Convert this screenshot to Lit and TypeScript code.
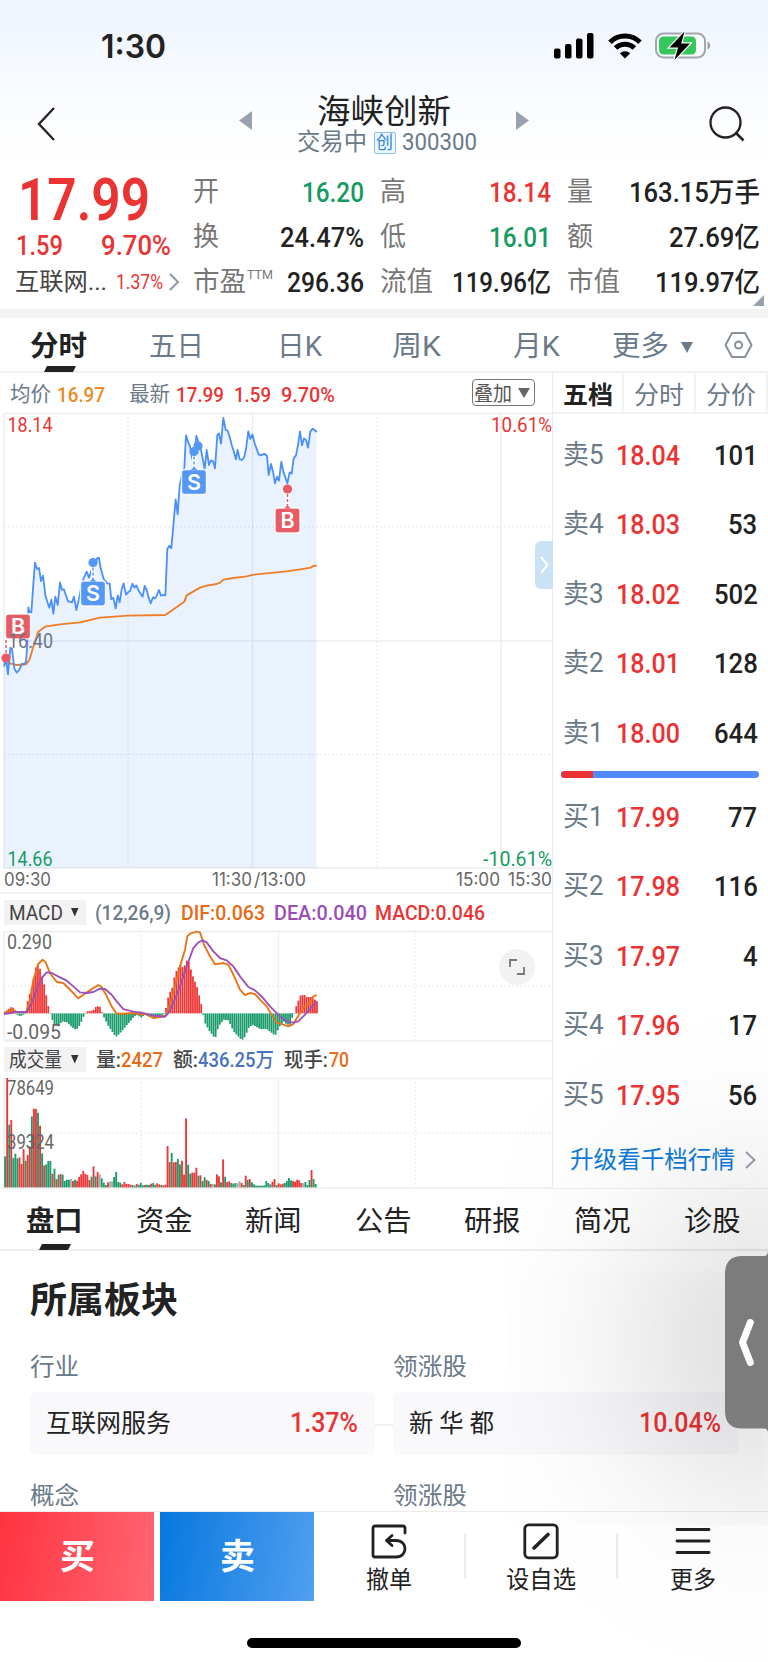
import { LitElement, html, svg, css } from "lit";
import { customElement, property } from "lit/decorators.js";

/* One line of text, stretched or condensed to a set advance width. */
@customElement("fit-text")
class FitText extends LitElement {
  @property() t = "";
  @property({ type: Number }) w = 0;
  @property({ type: Number }) gap = 0;
  static styles = css`
    :host { display: block; flex: none; height: 1em; line-height: 1; }
    .run { display: inline-block; white-space: pre; transform-origin: 0 50%; line-height: 1; vertical-align: top; }
  `;
  updated() {
    const run = this.renderRoot.querySelector(".run") as HTMLElement;
    run.style.transform = "none";
    const natural = run.getBoundingClientRect().width;
    this.style.width = this.w + "px";
    this.style.marginLeft = this.gap + "px";
    if (natural) run.style.transform = `scaleX(${this.w / natural})`;
  }
  render() {
    return html`<span class="run">${this.t}</span>`;
  }
}

const fit = (t: string, w: number, cls = "", gap = 0) =>
  html`<fit-text .t=${t} .w=${w} .gap=${gap} class=${cls}></fit-text>`;

type Pt = [number, number];
const parse = (s: string): Pt[] => s.trim().split(/\s+/).map((p) => p.split(",").map(Number) as Pt);
const at = (pts: Pt[], x: number) => {
  for (let i = 1; i < pts.length; i++) {
    if (x <= pts[i][0]) {
      const [a, b] = [pts[i - 1], pts[i]];
      return a[1] + ((b[1] - a[1]) * (x - a[0])) / (b[0] - a[0]);
    }
  }
  return pts[pts.length - 1][1];
};

/* Series are stored at three units per pixel. */
const PRICE = `12,875 17,848 24,898 31,818 36,822 43,880 50,893 58,884 66,866 72,868 78,860 81,820 83,780 85,697 88,710 94,712 99,640 105,563 111,582 117,579 123,618 129,602 136,660 142,680 148,698 154,674 160,716 166,665 173,690 180,622 186,645 192,643 198,662 204,679 210,680 216,682 222,665 229,705 236,675 243,640 250,612 260,590 267,608 278,575 285,570 292,549 297,549 302,580 311,612 322,625 329,626 334,673 340,668 347,701 353,661 359,682 365,643 371,625 378,659 384,652 390,648 397,626 403,638 409,631 415,645 421,655 428,665 434,633 440,645 446,668 452,685 459,667 465,670 471,660 477,645 483,662 489,660 496,661 502,522 508,512 514,520 521,440 527,373 533,418 539,330 546,300 553,278 558,181 564,200 570,215 577,252 583,240 589,182 595,200 601,215 608,250 614,282 620,225 627,270 633,256 639,258 645,280 652,180 657,175 663,206 670,129 677,165 683,167 689,185 696,213 702,232 708,253 713,225 719,253 726,255 732,248 738,222 745,169 751,192 757,178 764,205 770,222 776,238 782,241 788,238 795,237 801,243 806,300 813,267 819,290 825,325 831,305 837,317 844,260 850,290 857,310 862,325 869,292 875,296 881,250 888,241 894,210 900,169 906,211 912,190 918,195 924,218 931,170 938,161 944,165 950,171`;
const AVERAGE = `14,866 30,865 50,870 78,868 88,855 100,815 115,770 135,755 180,748 240,742 300,728 385,722 496,720 525,700 553,680 560,661 600,638 620,632 650,627 660,623 670,614 700,609 740,604 760,599 860,589 900,583 932,578 940,573 950,572`;
const HIST = parse(`12,518 36,500 46,515 50,524 60,530 72,524 76,518 85,470 92,455 100,420 106,385 112,375 118,382 124,405 130,425 136,455 142,490 148,515 152,525 160,552 175,560 185,545 200,548 215,562 228,571 240,555 250,530 256,521 260,515 280,512 283,503 298,498 304,514 310,530 325,560 347,592 360,580 375,562 400,533 410,525 425,535 435,522 445,532 460,532 475,530 485,528 495,521 500,490 507,460 515,450 525,400 540,375 550,385 562,357 568,372 575,402 590,440 600,480 607,510 612,545 625,570 645,597 655,560 670,540 685,542 700,575 725,602 735,590 745,565 757,555 780,568 800,568 825,588 838,560 850,545 860,555 870,555 877,530 883,521 888,500 900,468 912,465 920,472 935,472 950,485`);
const DIF = `12,520 25,515 36,508 50,517 78,518 90,480 100,420 115,372 128,360 137,368 150,400 170,427 190,430 205,445 235,476 250,465 265,455 280,445 295,436 305,442 318,465 335,500 350,522 370,522 400,520 425,525 435,522 460,535 480,532 497,528 510,495 525,440 540,380 555,330 562,290 570,282 590,276 600,278 612,315 630,350 645,374 670,370 685,375 700,405 720,450 735,466 750,460 765,463 780,480 800,500 815,525 830,548 850,555 865,560 880,553 895,528 910,505 930,490 940,470 950,466`;
const DEA = `12,523 50,517 80,517 95,490 110,450 125,415 140,398 155,400 180,413 200,423 220,440 240,458 260,460 280,457 300,447 315,448 335,465 350,485 370,508 400,516 430,520 460,528 495,531 505,520 520,490 540,440 560,380 580,325 595,308 608,302 620,308 640,335 660,355 680,362 700,380 720,410 745,442 765,452 785,470 810,500 840,530 860,545 880,549 895,545 910,530 930,508 950,485`;
const VOLUME = `g350 r115 g255 r241 g355 g342 g356 r353 r373 r328 g363 r346 r320 g230 r207 r208 g219 r258 g341 r377 g374 g364 g364 r402 g387 r418 g405 r403 g405 g424 g420 g420 n418 r424 g420 r423 r412 r404 r394 r402 r406 r421 g411 r380 g410 r397 n404 g416 g429 g436 r428 n425 n425 g412 g397 g427 g429 r434 r427 r433 r433 r435 g436 g438 r433 g435 g430 g437 r436 g435 g436 r432 g430 g435 r431 r434 g436 r437 r435 r319 r367 g340 r368 r367 g358 g374 r363 r405 r236 g375 g402 r399 r399 r384 g408 r407 g424 g413 r421 g424 r433 n433 g434 r404 r410 g428 r359 g411 r427 r425 g430 g432 g430 n430 n424 r430 g436 r408 g421 r418 g428 g434 g438 g438 g438 g438 g437 g424 g430 g434 r426 r418 g436 r431 r434 r432 g430 g424 g415 g422 r424 r426 r420 r422 r430 n430 g427 g436 g421 r391 g418 g433`.split(" ");
const TONE: Record<string, string> = { r: "#ee3636", g: "#1a9b6c", n: "#aaaaaa" };

const label = (x: number, y: number, w: number, t: string, fill: string) =>
  svg`<text x=${x} y=${y} textLength=${w} lengthAdjust="spacingAndGlyphs" fill=${fill} font-size="20.5">${t}</text>`;

const marker = (x: number, y: number, t: string, dots: Pt[], stem?: number) => {
  const c = t === "S" ? "#5597f5" : "#e65b64";
  const sx = stem ?? x;
  const up = dots[0][1] < y;
  return svg`
    <path d="M${sx} ${dots[0][1]}V${up ? y - 12 : y + 12}" stroke="#fff" stroke-width="4"/>
    <path d="M${sx} ${dots[0][1]}V${up ? y - 12 : y + 12}" stroke=${c} stroke-width="1.5" stroke-dasharray="3 2"/>
    <rect x=${x - 12.5} y=${y - 12.5} width="25" height="25" rx="3" fill=${c} stroke="#fff" stroke-opacity=".85" stroke-width="1.4"/>
    ${up ? svg`<path d=${`M${x - 3.5} ${y - 12}l3.5-3 3.5 3z`} fill=${c}/>` : ""}
    ${dots.map(([dx, dy]) => svg`<circle cx=${dx} cy=${dy} r="4.6" fill=${c}/>`)}
    <text x=${x} y=${y + 7.5} text-anchor="middle" fill="#fff" font-size="21.5" font-family="Inter" font-weight="600">${t}</text>`;
};

const QUOTES: [string, number, string, string, number][][] = [
  [["开", 26, "16.20", "green", 62], ["高", 26, "18.14", "red", 62], ["量", 26, "163.15万手", "", 131]],
  [["换", 26, "24.47%", "", 84], ["低", 26, "16.01", "green", 62], ["额", 26, "27.69亿", "", 91]],
  [["市盈", 53, "296.36", "", 77], ["流值", 53, "119.96亿", "", 99], ["市值", 53, "119.97亿", "", 105]],
];
const ASKS: [string, string, string][] = [["卖5", "18.04", "101"], ["卖4", "18.03", "53"], ["卖3", "18.02", "502"], ["卖2", "18.01", "128"], ["卖1", "18.00", "644"]];
const BIDS: [string, string, string][] = [["买1", "17.99", "77"], ["买2", "17.98", "116"], ["买3", "17.97", "4"], ["买4", "17.96", "17"], ["买5", "17.95", "56"]];

@customElement("app-root")
class AppRoot extends LitElement {
  static styles = css`
    :host { display: block; width: 768px; height: 1662px; }
    * { box-sizing: border-box; }
    .page { position: relative; width: 768px; height: 1662px; overflow: hidden; display: flex; flex-direction: column; color: #222;
      background: linear-gradient(#eff4fe 0, #f1f6ff 30px, #fafcff 100px, #fff 165px);
      font-family: Roboto, "Noto Sans CJK SC", sans-serif; font-size: 27px; }
    svg { display: block; flex: none; overflow: visible; }
    .row { display: flex; align-items: center; flex: none; }
    .red { color: #eb3333; } .green { color: #169b62; } .slate { color: #6b7a89; } .gray { color: #777; } .dark { color: #444; } .ink { color: #222; }
    .orange { color: #ea8a23; } .deep { color: #e86a14; } .purple { color: #9b4db5; } .blue { color: #4871c0; } .link { color: #0f7add; }
    .m { font-weight: 500; } .b { font-weight: 700; }
    .s20 { font-size: 20px; } .s21 { font-size: 21px; } .s24 { font-size: 24px; } .s25 { font-size: 25px; } .s28 { font-size: 28px; } .s36 { font-size: 36px; }
    .status { height: 82px; padding: 10px 57px 0 101px; justify-content: space-between; }
    .clock { font: 600 33px Inter, sans-serif; }
    .status .icons { gap: 13.5px; }
    .head { height: 83px; padding: 0 22px 0 36px; justify-content: space-between; align-items: flex-start; }
    .head .side { padding-top: 25px; }
    .head .mid { gap: 44px; align-items: flex-start; margin-left: 3px; }
    .head .mid .arrow { padding-top: 29px; }
    .names { display: flex; flex-direction: column; align-items: center; width: 178px; margin: 0 -1px; }
    .title { font-size: 33.5px; margin-top: 13px; }
    .sub { margin-top: 2.5px; height: 24px; font-size: 23.5px; padding-left: 5px; }
    .badge { width: 22px; height: 22px; border: 1.5px solid #8dbff0; border-radius: 2px; margin: 0 6px 0 7px; background: #eef6ff; color: #2d86dc; font-size: 18px; padding: 1px 0 0 1px; }
    .summary { height: 144px; align-items: flex-start; position: relative; }
    .last { width: 193px; padding-left: 16px; flex: none; }
    .big { font-size: 60px; font-weight: 600; margin-top: 5px; }
    .chg { height: 34px; margin-top: -1px; }
    .ind { height: 38px; }
    .quotes { width: 567px; display: grid; grid-template-columns: 171px 171px 193px; column-gap: 16px; grid-auto-rows: 45px; padding-top: 5px; }
    .quotes .cell { display: flex; align-items: center; justify-content: space-between; }
    .val { font-weight: 500; font-size: 27.5px; }
    .pe { align-items: flex-start; }
    .ttm { font-size: 13.5px; margin-top: -1px; }
    .fold { position: absolute; right: 4px; top: 130px; }
    .band { height: 9px; background: #f3f3f4; flex: none; }
    .tabs { height: 55px; border-bottom: 2px solid #edeff1; padding: 5px 0 0 30px; position: relative; }
    .tick { position: absolute; left: 44px; bottom: -1px; }
    .main { display: flex; flex: none; height: 815px; }
    .charts { width: 553px; flex: none; position: relative; border-right: 1px solid #e9ebee; }
    .info { height: 40px; padding: 3px 0 0 10px; }
    .overlay { width: 63px; height: 27px; border: 1.5px solid #777; border-radius: 4px; margin-left: 137px; padding: 2px 0 0 1px; color: #555; margin-top: -4px; }
    .plot { height: 455px; }
    .axis { height: 26px; padding-left: 4px; color: #666; border-bottom: 2px solid #f0f1f2; font-family: Inter, sans-serif; font-size: 18px; }
    .legend { height: 37px; padding-left: 4px; }
    .pill { width: 82px; height: 25px; background: #f2f2f2; padding-left: 5px; color: #444; }
    .mini { height: 110px; }
    .drawer { position: absolute; right: -1px; top: 168px; width: 18px; height: 48px; border-radius: 6px 0 0 6px; background: #cbe2f6; padding: 15px 0 0 5px; }
    .full { position: absolute; left: 499px; top: 576px; width: 36px; height: 36px; border-radius: 50%; background: #f2f2f2; padding: 10px; }
    .book { width: 215px; flex: none; }
    .btabs { height: 41px; border-bottom: 2px solid #f0f1f3; }
    .btabs div { height: 41px; border-right: 2px solid #f0f1f3; display: flex; align-items: center; width: 72px; padding-top: 5px; }
    .btabs div:first-child { width: 71px; }
    .lvl { height: 69.5px; padding: 0 11px 0 10px; }
    .asks { padding-top: 6.5px; }
    .ratio { display: flex; height: 7px; margin: 3px 9px 0 8px; border-radius: 4px; overflow: hidden; background: #4f8cfa; }
    .ratio i { width: 16%; background: #eb3333; }
    .bids { padding-top: 4.5px; }
    .more { height: 60px; padding-left: 17px; }
    .nav { height: 63px; border-top: 1px solid #f0f0f0; border-bottom: 2px solid #ededed; padding: 6px 0 0 26px; position: relative; }
    .nav .tick { left: 39px; }
    .sector { flex: none; height: 260px; padding: 32px 30px 0; }
    .two { display: grid; grid-template-columns: 345px 345px; column-gap: 18px; }
    .heads { height: 25px; margin-top: 36px; }
    .cards { margin-top: 12px; position: relative; }
    .card { height: 63px; border-radius: 7px; background: #f9f9fc; display: flex; align-items: center; justify-content: space-between; padding: 0 17px 0 16px; }
    .join { position: absolute; left: 345px; top: 32px; width: 18px; height: 2px; background: #f0f0f1; }
    .next { margin-top: 29px; }
    .dock { height: 151px; align-items: flex-start; border-top: 1px solid #ececec; background: #fff; position: relative; }
    .btn { width: 154px; height: 89px; display: flex; align-items: center; justify-content: center; color: #fff; font-weight: 700; font-size: 35px; margin-right: 6px; padding: 2px 0 0 2px; }
    .buy { background: linear-gradient(100deg, #ff3340, #ff6672); }
    .sell { background: linear-gradient(100deg, #0678de, #519ff0); margin-right: 1px; }
    .act { width: 150px; height: 89px; display: flex; flex-direction: column; align-items: center; padding-top: 11px; gap: 10px; font-size: 23.5px; }
    .bar { width: 2px; height: 46px; background: #ececec; margin-top: 21px; }
    .home { position: absolute; left: 247px; top: 126px; width: 274px; height: 10px; border-radius: 5px; background: #000; }
    .haze { position: absolute; left: 725px; top: 1256px; width: 90px; height: 172px; border-radius: 14px; box-shadow: 0 0 220px 20px rgba(0, 0, 0, 0.4); }
    .handle { position: absolute; left: 725px; top: 1248px; }
  `;

  status() {
    return html`<div class="row status">
      ${fit("1:30", 65, "clock")}
      <div class="row icons">
        <svg width="40" height="26" viewBox="0 0 40 26"><rect x="0" y="15.5" width="6.5" height="10" rx="2"/><rect x="11" y="11" width="6.5" height="14.5" rx="2"/><rect x="22" y="5.5" width="6.5" height="20" rx="2"/><rect x="33" y="0" width="6.5" height="25.5" rx="2"/></svg>
        <svg width="34" height="26" viewBox="0 0 34 26" fill="none" stroke="#000" stroke-width="5"><path d="M2 9.2a21.4 21.4 0 0 1 30 0"/><path d="M7.6 15a13.4 13.4 0 0 1 18.8 0"/><path d="M17 25.6l-5.2-5.4a7.6 7.6 0 0 1 10.4 0z" fill="#000" stroke="none"/></svg>
        <svg width="56" height="28" viewBox="0 0 56 28"><rect x="1" y="1.5" width="49" height="24" rx="7.5" fill="#fff" fill-opacity=".5" stroke="#a3a6aa" stroke-width="2"/><rect x="4" y="4.5" width="37" height="18" rx="4.5" fill="#35c759"/><path d="M52.500 9.500c3.600 1.400 3.600 6.600 0 8z" fill="#9a9da1"/><path d="M29.500-.5L14.500 15.600h8.600l-3.600 12.400L35 11.500h-8.800z" fill="#000" stroke="#fff" stroke-width="2.400" paint-order="stroke"/></svg>
      </div>
    </div>`;
  }

  header() {
    return html`<div class="row head">
      <svg class="side" width="20" height="59" viewBox="0 0 20 34"><path d="M18 1L3 17l15 16" fill="none" stroke="#222" stroke-width="2.300"/></svg>
      <div class="row mid">
        <svg class="arrow" width="13" height="48" viewBox="0 0 13 19"><path d="M13 0v19L0 9.500z" fill="#98a3af"/></svg>
        <div class="names">
          ${fit("海峡创新", 134, "title")}
          <div class="row sub slate">${fit("交易中", 70)}<span class="badge">${fit("创", 17)}</span>${fit("300300", 75)}</div>
        </div>
        <svg class="arrow" width="13" height="48" viewBox="0 0 13 19"><path d="M0 0v19l13-9.500z" fill="#98a3af"/></svg>
      </div>
      <svg class="side" width="37" height="59" viewBox="0 0 37 34"><circle cx="16.500" cy="15.500" r="15" fill="none" stroke="#222" stroke-width="2.300"/><path d="M27 26l7.500 7.500" stroke="#222" stroke-width="2.500"/></svg>
    </div>`;
  }

  summary() {
    return html`<div class="row summary">
      <div class="last red">
        ${fit("17.99", 132, "big", 2)}
        <div class="row chg m">${fit("1.59", 47)}${fit("9.70%", 70, "", 38)}</div>
        <div class="row ind">${fit("互联网...", 92, "s24 dark", -1)}${fit("1.37%", 47, "s20", 9)}
          <svg width="10" height="16" viewBox="-6 0 10 16"><path d="M1 0l8 8-8 8" fill="none" stroke="#8d99a5" stroke-width="2"/></svg></div>
      </div>
      <div class="quotes">
        ${QUOTES.flat().map(([k, kw, v, c, vw]) => html`<div class="cell"><div class="row gray pe">${fit(k, kw)}${k === "市盈" ? fit("TTM", 26, "ttm", 1) : ""}</div>${fit(v, vw, "val " + c)}</div>`)}
      </div>
      <svg class="fold" width="11" height="11"><path d="M11 0v11H0z" fill="#96a1ad"/></svg>
    </div>`;
  }

  tick() {
    return html`<svg class="tick" width="32" height="6"><path d="M3 0h29l-3 6H0z" fill="#222"/></svg>`;
  }

  grid(h: number, xs: number[]) {
    return svg`<g stroke="#ebedef" stroke-width="1.500" fill="none">
      <path d=${`M4 .5H552M4 0V${h}M4 ${h}H552M${xs[1]} 0V${h}`}/>
      <path stroke-dasharray="2 2" d=${`M${xs[0]} 0V${h}M${xs[2]} 0V${h}`}/>
    </g>`;
  }

  charts() {
    const hist = Array.from({ length: 152 }, (_, i) => {
      const x = 12 + i * 6.2;
      return [x, at(HIST, Math.min(x + 2, 950))] as Pt;
    });
    return html`<div class="charts">
      <div class="row info s20">
        ${fit("均价", 41, "slate s21")}${fit("16.97", 48, "orange m", 6)}${fit("最新", 41, "slate s21", 24)}${fit("17.99", 48, "red m", 6)}${fit("1.59", 37, "red m", 10)}${fit("9.70%", 54, "red m", 10)}
        <div class="row overlay">${fit("叠加", 38, "s20", 0)}<svg width="12" height="10" viewBox="-6 1 12 10"><path d="M0 0h12L6 10z" fill="#666"/></svg></div>
      </div>
      <svg class="plot" width="552" height="455">
        ${this.grid(455, [128, 252.5, 376.5])}
        <path d="M501 0V455M4 228H552" stroke="#eceef0" stroke-width="1.500"/>
        <path d="M4 114H552M4 341.500H552" stroke="#e4e6e9" stroke-width="1.200" stroke-dasharray="2 2"/>
        <g transform="translate(0 -38) scale(.33333)" fill="none" stroke-linejoin="round">
          <path d=${`M12,1479 L${PRICE} L950,1479Z`} fill="#4c8dff" fill-opacity=".11"/>
          <path d=${`M${AVERAGE}`} stroke="#ee7d26" stroke-width="5.600"/>
          <path d=${`M${PRICE}`} stroke="#4a90fb" stroke-width="5.400"/>
        </g>
        ${marker(93, 180.5, "S", [[93, 149.5]])}
        ${marker(194, 69, "S", [[194, 38.5], [198, 33]])}
        ${marker(287.5, 107.5, "B", [[287.5, 76]])}
        ${marker(18, 213.5, "B", [[6, 245]], 6)}
        ${label(7.5, 19, 45, "18.14", "#eb3333")}${label(8, 235, 45, "16.40", "#6a7582")}${label(7.5, 453, 45, "14.66", "#169b62")}
        ${label(491, 19, 61, "10.61%", "#eb3333")}${label(483, 453, 69, "-10.61%", "#169b62")}
      </svg>
      <div class="row axis">${fit("09:30", 47)}${fit("11:30", 40, "", 161)}${fit("/13:00", 52, "", 2)}${fit("15:00", 44, "", 150)}${fit("15:30", 44, "", 8)}</div>
      <div class="row legend s20">
        <div class="row pill">${fit("MACD", 54)}<svg width="8" height="9" viewBox="-8 0 8 9"><path d="M0 0h7.500L3.750 8.500z" fill="#333"/></svg></div>
        ${fit("(12,26,9)", 76, "slate m", 9)}${fit("DIF:0.063", 84, "deep m", 10)}${fit("DEA:0.040", 93, "purple m", 9)}${fit("MACD:0.046", 110, "red m", 8)}
      </div>
      <svg class="mini" width="552" height="110">
        ${this.grid(110, [141, 278.5, 415.5])}
        <path d="M4 55H552" stroke="#e4e6e9" stroke-width="1.200" stroke-dasharray="2 2"/>
        <g transform="translate(0 -91.300) scale(.33333)" fill="none" stroke-linejoin="round">
          ${hist.map(([x, y]) => svg`<rect x=${x} y=${Math.min(521, y)} width="5.300" height=${Math.max(1.5, Math.abs(521 - y))} fill=${y < 521 ? TONE.r : TONE.g}/>`)}
          <path d=${`M${DIF}`} stroke="#e97415" stroke-width="5.600"/>
          <path d=${`M${DEA}`} stroke="#9d51b8" stroke-width="5.600"/>
        </g>
        ${label(7, 18, 45, "0.290", "#666")}${label(7, 108, 54, "-0.095", "#666")}
      </svg>
      <div class="row legend s20">
        <div class="row pill">${fit("成交量", 53)}<svg width="8" height="9" viewBox="-9 0 8 9"><path d="M0 0h7.500L3.750 8.500z" fill="#333"/></svg></div>
        ${fit("量:", 25, "m dark", 10)}${fit("2427", 42, "deep m", 0)}${fit("额:", 25, "m dark", 10)}${fit("436.25万", 76, "blue m", 0)}${fit("现手:", 44, "m dark", 10)}${fit("70", 20, "deep m", 1)}
      </div>
      <svg class="mini" width="552" height="110">
        ${this.grid(110, [141, 278.5, 415.5])}
        <path d="M4 55H552" stroke="#e4e6e9" stroke-width="1.200" stroke-dasharray="2 2"/>
        <g transform="translate(0 -38.300) scale(.33333)">
          ${VOLUME.map((v, i) => svg`<rect x=${12.5 + i * 6.17} y=${+v.slice(1)} width="5.600" height=${443 - +v.slice(1)} fill=${TONE[v[0]]}/>`)}
        </g>
        ${label(7, 17, 47, "78649", "#666")}${label(7, 71, 47, "39324", "#666")}
      </svg>
      <div class="drawer"><svg width="8" height="18"><path d="M1 1l6.500 8L1 17" fill="none" stroke="#fff" stroke-width="2"/></svg></div>
      <div class="full"><svg width="16" height="16"><path d="M1 8V1h7M15 8v7H8" fill="none" stroke="#777" stroke-width="1.800"/></svg></div>
    </div>`;
  }

  level([k, p, q]: [string, string, string]) {
    return html`<div class="row lvl">${fit(k, 40.5, "slate")}${fit(p, 64, "red val", 12)}${fit(q, q.length * 14.6, "val", 78 - q.length * 14.6)}</div>`;
  }

  book() {
    return html`<div class="book">
      <div class="row btabs"><div>${fit("五档", 50, "b s25", 10)}</div><div>${fit("分时", 50, "slate s25", 10)}</div><div>${fit("分价", 50, "slate s25", 10)}</div></div>
      <div class="asks">${ASKS.map((l) => this.level(l))}</div>
      <div class="ratio"><i></i></div>
      <div class="bids">${BIDS.map((l) => this.level(l))}</div>
      <div class="row more">${fit("升级看千档行情", 165, "link s24")}<svg width="11" height="18" viewBox="-10 0 11 18"><path d="M1 1l8.500 8L1 17" fill="none" stroke="#98a3af" stroke-width="2"/></svg></div>
    </div>`;
  }

  render() {
    return html`<div class="page">
      ${this.status()}${this.header()}${this.summary()}
      <div class="band"></div>
      <div class="row tabs slate s28">
        ${fit("分时", 57, "b ink")}${fit("五日", 55, "", 62)}${fit("日K", 45, "", 73)}${fit("周K", 49, "", 70)}${fit("月K", 47, "", 72)}${fit("更多", 57, "", 52)}
        <svg width="14" height="11" viewBox="-12 0 14 11"><path d="M0 0h12L6 11z" fill="#6b7a89"/></svg>
        <svg width="28" height="26" viewBox="-41.500 2 28 26" fill="none" stroke="#86909b" stroke-width="2"><path d="M7.500 1h13L27 13l-6.500 12h-13L1 13z" stroke-linejoin="round"/><circle cx="14" cy="13" r="3.500"/></svg>
        ${this.tick()}
      </div>
      <div class="main">${this.charts()}${this.book()}</div>
      <div class="row nav s28">
        ${["盘口", "资金", "新闻", "公告", "研报", "简况", "诊股"].map((t, i) => fit(t, 56.5, i ? "" : "b", i ? 53.1 : 0))}
        ${this.tick()}
      </div>
      <div class="sector">
        ${fit("所属板块", 148, "b s36")}
        <div class="two heads slate s24">${fit("行业", 49)}${fit("领涨股", 74)}</div>
        <div class="two cards">
          <div class="card">${fit("互联网服务", 125, "s25")}${fit("1.37%", 68, "red m")}</div>
          <div class="card">${fit("新 华 都", 85, "s25")}${fit("10.04%", 82, "red m")}</div>
          <div class="join"></div>
        </div>
        <div class="two next slate s24">${fit("概念", 49)}${fit("领涨股", 74)}</div>
      </div>
      <div class="row dock">
        <div class="btn buy">${fit("买", 35)}</div>
        <div class="btn sell">${fit("卖", 35)}</div>
        <div class="act"><svg width="36" height="36" viewBox="0 0 36 36" fill="none" stroke="#222" stroke-width="2.800" stroke-linecap="round" stroke-linejoin="round"><path d="M34 10V5a2 2 0 0 0-2-2H4a2 2 0 0 0-2 2v27a2 2 0 0 0 2 2h21c12 0 12-16.500 0-16.500h-9"/><path d="M21 12.500l-5.500 5 5.500 5"/></svg>${fit("撤单", 46)}</div>
        <div class="bar"></div>
        <div class="act"><svg width="36" height="36" viewBox="0 0 36 36" fill="none" stroke="#222" stroke-width="2.800"><rect x="1.800" y="1.800" width="32.400" height="33" rx="4"/><path d="M11 25l14-13.500" stroke-width="3.600" stroke-linecap="round"/></svg>${fit("设自选", 70)}</div>
        <div class="bar"></div>
        <div class="act"><svg width="36" height="36" viewBox="0 0 36 36" stroke="#222" stroke-width="2.800" stroke-linecap="round"><path d="M2 6.500h32M2 18h32M2 29.500h32"/></svg>${fit("更多", 46)}</div>
        <div class="home"></div>
      </div>
      <div class="haze"></div>
      <svg class="handle" width="43" height="188"><path d="M43 3.500v181q-.5-4-4-4H17Q0 180.500 0 163V25.500Q0 8 17 8h22q3.500 0 4-4.500z" fill="#7c7c7c"/><path d="M25.300 74.500l-7.800 20 7.800 20" fill="none" stroke="#fff" stroke-width="7" stroke-linecap="round" stroke-linejoin="round"/></svg>
    </div>`;
  }
}
